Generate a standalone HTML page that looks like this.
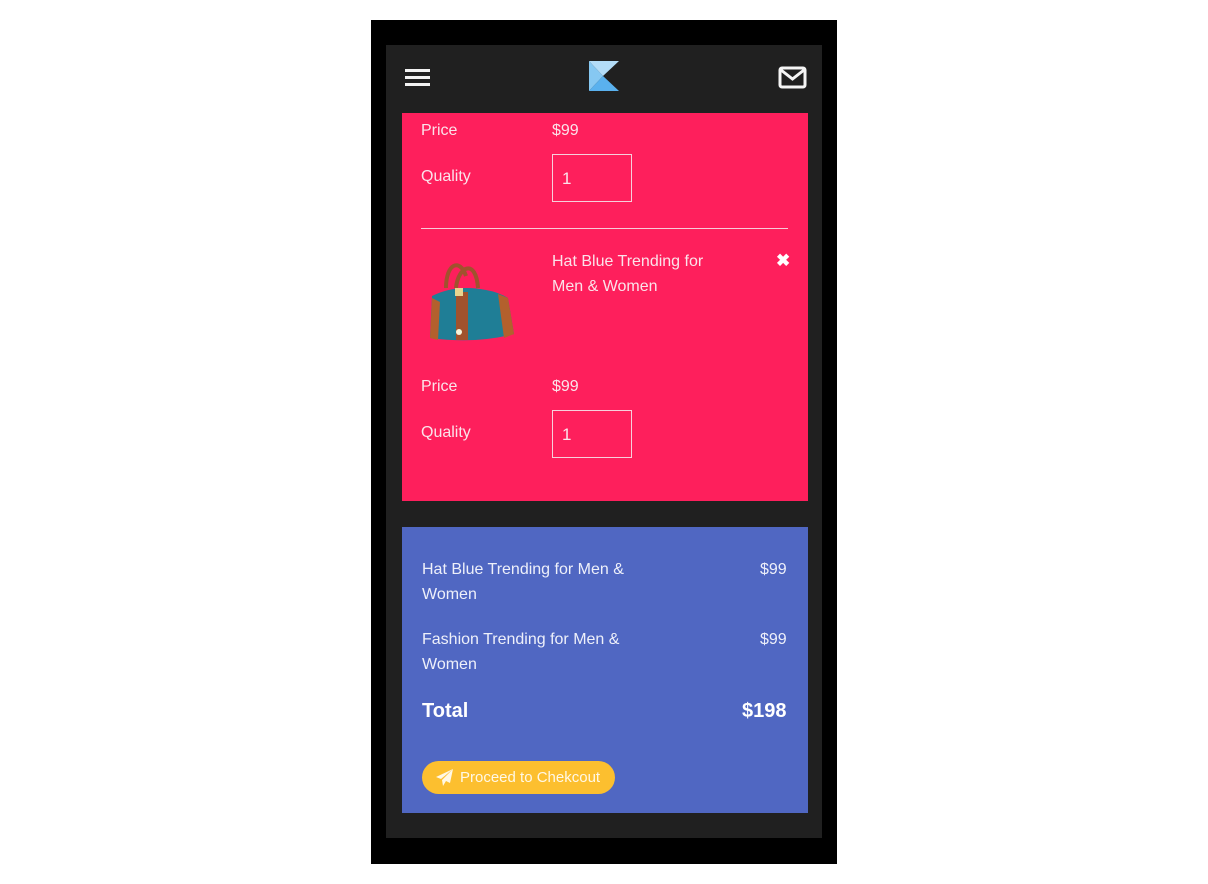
<!DOCTYPE html>
<html><head><meta charset="utf-8"><style>
*{margin:0;padding:0;box-sizing:border-box}
body{width:1208px;height:884px;background:#fff;position:relative;font-family:"Liberation Sans",sans-serif;color:#fff;overflow:hidden}
.abs{position:absolute}
.t{position:absolute;font-size:16px;color:#fbe3ea;white-space:nowrap}
.b{position:absolute;font-size:16px;color:#eef0fa;line-height:25px}
.box{position:absolute;width:80px;height:48px;border:1px solid #f6d0dc;font-size:17px;padding:14px 0 0 9px;color:#fbe3ea}
</style></head><body>
<div class="abs" style="left:371px;top:20px;width:466px;height:844px;background:#000"></div>
<div class="abs" style="left:386px;top:45px;width:436px;height:793px;background:#202020"></div>
<svg class="abs" style="left:404px;top:68px" width="27" height="20"><rect x="1" y="1" width="25" height="3" fill="#f2f2f2"/><rect x="1" y="8" width="25" height="3" fill="#f2f2f2"/><rect x="1" y="15" width="25" height="3" fill="#f2f2f2"/></svg>
<svg class="abs" style="left:589px;top:61px" width="32" height="32"><polygon points="0,0 30,0 14,15" fill="#b3dcf7"/><polygon points="0,0 14,15 0,30" fill="#86c8f2"/><polygon points="14,15 30,30 0,30" fill="#5ab1ee"/></svg>
<svg class="abs" style="left:778px;top:66px" width="29" height="23"><rect x="2" y="2" width="25" height="19" rx="2" fill="none" stroke="#f5f5f5" stroke-width="3"/><polyline points="3,4 14.5,13 26,4" fill="none" stroke="#f5f5f5" stroke-width="3"/></svg>
<div class="abs" style="left:402px;top:113px;width:406px;height:388px;background:#fe1f5c"></div>
<div class="t" style="left:421px;top:122px">Price</div>
<div class="t" style="left:552px;top:122px">$99</div>
<div class="t" style="left:421px;top:168px">Quality</div>
<div class="box" style="left:552px;top:154px">1</div>
<div class="abs" style="left:421px;top:228px;width:367px;height:1px;background:#f6cbd8"></div>
<svg class="abs" style="left:426px;top:258px" width="90" height="86">
<path d="M20 30 C20 5 34 0 40 18 M30 30 C32 8 50 0 52 30" stroke="#a0522d" stroke-width="4" fill="none"/>
<path d="M6 38 Q30 26 60 32 Q72 34 82 40 L88 76 Q50 86 4 80 Z" fill="#1f7e96"/>
<rect x="30" y="34" width="12" height="48" fill="#a0522d"/>
<path d="M4 80 L6 40 L14 44 L12 82Z M72 36 L82 40 L88 76 L78 80Z" fill="#b3602d"/>
<rect x="29" y="30" width="8" height="8" fill="#e8d58f"/>
<circle cx="33" cy="74" r="3" fill="#f5f5dc"/>
</svg>
<div class="t" style="left:552px;top:249px;line-height:25px">Hat Blue Trending for<br>Men &amp; Women</div>
<div class="t" style="left:776px;top:251px;font-size:17px;font-weight:bold;color:#fff">✖</div>
<div class="t" style="left:421px;top:378px">Price</div>
<div class="t" style="left:552px;top:378px">$99</div>
<div class="t" style="left:421px;top:424px">Quality</div>
<div class="box" style="left:552px;top:410px">1</div>
<div class="abs" style="left:402px;top:527px;width:406px;height:286px;background:#5067c2"></div>
<div class="b" style="left:422px;top:557px">Hat Blue Trending for Men &amp;<br>Women</div>
<div class="b" style="left:760px;top:557px">$99</div>
<div class="b" style="left:422px;top:627px">Fashion Trending for Men &amp;<br>Women</div>
<div class="b" style="left:760px;top:627px">$99</div>
<div class="b" style="left:422px;top:699px;font-size:20px;font-weight:bold;color:#fff">Total</div>
<div class="b" style="left:742px;top:699px;font-size:20px;font-weight:bold;color:#fff">$198</div>
<div class="abs" style="left:422px;top:761px;width:193px;height:33px;border-radius:17px;background:#fcbf2f"></div>
<svg class="abs" style="left:436px;top:769px" width="18" height="17"><path d="M17 0 L0 8 L5 10 Z M17 0 L6 11 L7 17 L10 12 L14 14 Z" fill="#fff8e6"/></svg>
<div class="t" style="left:460px;top:769px;font-size:15px;color:#fff8e6">Proceed to Chekcout</div>
</body></html>
